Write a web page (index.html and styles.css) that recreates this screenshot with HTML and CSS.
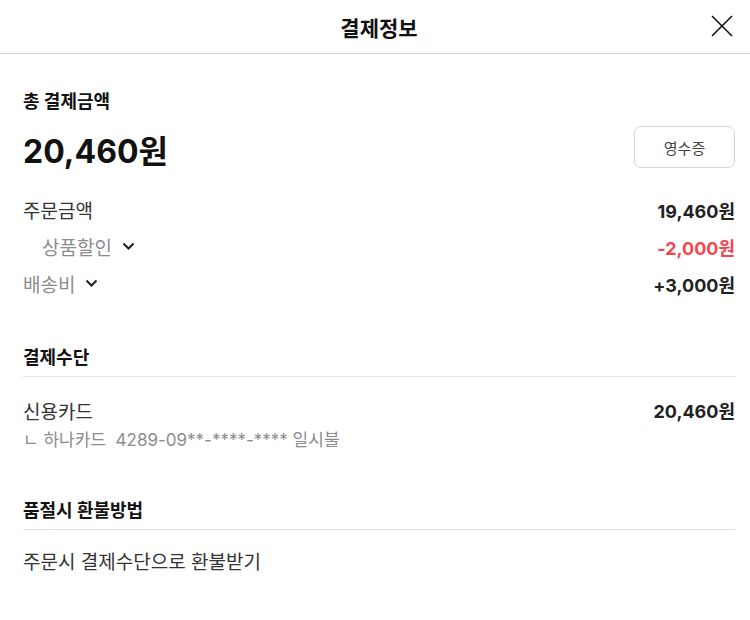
FILE: index.html
```html
<!DOCTYPE html>
<html lang="ko">
<head>
<meta charset="utf-8">
<title>결제정보</title>
<link rel="stylesheet" href="styles.css">
</head>
<body>
<div class="sheet">
  <header class="topbar">
    <h1 class="title">결제정보</h1>
    <button class="close" aria-label="닫기">
      <svg width="22" height="22" viewBox="0 0 22 22"><path d="M1 1 L21 21 M21 1 L1 21" stroke="#111" stroke-width="1.6" fill="none"/></svg>
    </button>
  </header>
  <main class="content">
    <section class="summary">
      <h2 class="sec-title">총 결제금액</h2>
      <div class="total-row">
        <span class="total">20,460원</span>
        <button class="receipt">영수증</button>
      </div>
      <div class="row">
        <span class="label">주문금액</span>
        <span class="amount">19,460원</span>
      </div>
      <div class="row">
        <span class="label sub muted">상품할인 <svg class="chev" width="13" height="9" viewBox="0 0 13 9"><path d="M1.5 1.5 L6.5 6.5 L11.5 1.5" stroke="#222" stroke-width="2" fill="none"/></svg></span>
        <span class="amount red">-2,000원</span>
      </div>
      <div class="row">
        <span class="label muted">배송비 <svg class="chev" width="13" height="9" viewBox="0 0 13 9"><path d="M1.5 1.5 L6.5 6.5 L11.5 1.5" stroke="#222" stroke-width="2" fill="none"/></svg></span>
        <span class="amount">+3,000원</span>
      </div>
    </section>
    <section class="block">
      <h2 class="sec-title lined">결제수단</h2>
      <div class="pay-row">
        <span class="label">신용카드</span>
        <span class="amount">20,460원</span>
      </div>
      <p class="card-info">ㄴ 하나카드&nbsp; 4289-09**-****-**** 일시불</p>
    </section>
    <section class="block refund">
      <h2 class="sec-title lined">품절시 환불방법</h2>
      <p class="refund-text">주문시 결제수단으로 환불받기</p>
    </section>
  </main>
</div>
</body>
</html>
```

FILE: styles.css
```css
* { box-sizing: border-box; }
html, body { margin: 0; padding: 0; background: #fff; }
body {
  font-family: Inter, "Noto Sans CJK KR", "Noto Sans", sans-serif;
  color: #222;
}
.sheet { width: 750px; }
.topbar {
  height: 54px;
  border-bottom: 1px solid #d3d9df;
  display: flex;
  align-items: center;
  justify-content: center;
  position: relative;
}
.title {
  margin: 0;
  font-size: 21px;
  font-weight: 700;
  color: #111;
  padding-left: 8px;
}
.close {
  position: absolute;
  right: 17px;
  top: 15px;
  border: 0;
  background: none;
  padding: 0;
  width: 22px;
  height: 22px;
  display: flex;
}
.content { padding: 0 15px 0 23px; }
.summary { padding-top: 38px; }
.sec-title {
  margin: 0;
  font-size: 18px;
  line-height: 20px;
  font-weight: 700;
  color: #111;
}
.total-row {
  margin-top: 14px;
  height: 42px;
  display: flex;
  align-items: center;
  justify-content: space-between;
}
.total {
  font-size: 32px;
  font-weight: 700;
  color: #111;
  padding-top: 4px;
}
.receipt {
  width: 101px;
  height: 42px;
  border: 1px solid #d4d4d4;
  border-radius: 7px;
  background: #fff;
  font-family: inherit;
  font-size: 15px;
  color: #444;
  padding: 0;
}
.row {
  height: 37px;
  display: flex;
  align-items: center;
  justify-content: space-between;
}
.total-row + .row { margin-top: 23px; }
.label {
  font-size: 19px;
  color: #333;
  display: flex;
  align-items: center;
  gap: 10px;
}
.label.sub { padding-left: 19px; }
.muted { color: #8c8c8c; }
.chev { display: block; margin-top: -1px; }
.amount {
  font-size: 18px;
  font-weight: 700;
  color: #222;
}
.amount.red { color: #f5474f; }
.block { padding-top: 46px; }
.sec-title.lined {
  padding-bottom: 8px;
  border-bottom: 1px solid #e3e3e3;
}
.pay-row {
  margin-top: 21px;
  height: 24px;
  display: flex;
  align-items: center;
  justify-content: space-between;
}
.card-info {
  margin: 8px 0 0;
  font-size: 17px;
  line-height: 20px;
  color: #8c8c8c;
}
.refund { padding-top: 51px; }
.refund-text {
  margin: 21px 0 0;
  font-size: 19px;
  line-height: 24px;
  color: #333;
}
```
